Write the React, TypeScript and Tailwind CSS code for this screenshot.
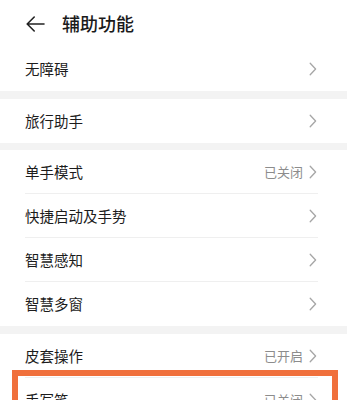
const Chevron = () => (
  <svg width="8" height="14" viewBox="0 0 8 14" fill="none" className="shrink-0">
    <path d="M1.2 1.2 L6.6 7 L1.2 12.8" stroke="#a6a6a6" strokeWidth="1.3" strokeLinecap="round" strokeLinejoin="round" />
  </svg>
);

const BackArrow = () => (
  <svg width="19" height="16" viewBox="0 0 19 16" fill="none">
    <path d="M18 8 H1.5 M8.2 1 L1.2 8 L8.2 15" stroke="#222" strokeWidth="1.6" strokeLinecap="round" strokeLinejoin="round" />
  </svg>
);

type Item = { label: string; status?: string };

const Row = ({ item, divider }: { item: Item; divider: boolean }) => (
  <div className="relative flex h-[44px] items-center pl-[25px] pr-[40px]">
    <span className="flex-1 text-[14.5px] text-[#1c1c1c]">{item.label}</span>
    {item.status && <span className="mr-[6px] text-[13px] text-[#8c8c8c]">{item.status}</span>}
    <Chevron />
    {divider && <div className="absolute bottom-0 left-[25px] h-px w-[293px] bg-[#efefef]" />}
  </div>
);

const Group = ({ items }: { items: Item[] }) => (
  <div>
    {items.map((it, i) => (
      <Row key={it.label} item={it} divider={i < items.length - 1} />
    ))}
  </div>
);

export default function App() {
  return (
    <div
      className="relative h-[400px] w-[357px] overflow-hidden bg-white"
      style={{ fontFamily: '"Noto Sans CJK SC", "Noto Sans", sans-serif' }}
    >
      <div className="flex h-[47px] items-center pl-[26px]">
        <BackArrow />
        <span className="ml-[17px] text-[18px] font-medium text-[#1a1a1a]">辅助功能</span>
      </div>
      <Group items={[{ label: "无障碍" }]} />
      <div className="h-[8px] w-[347px] bg-[#f3f3f3]" />
      <Group items={[{ label: "旅行助手" }]} />
      <div className="h-[7px] w-[347px] bg-[#f3f3f3]" />
      <Group
        items={[
          { label: "单手模式", status: "已关闭" },
          { label: "快捷启动及手势" },
          { label: "智慧感知" },
          { label: "智慧多窗" },
        ]}
      />
      <div className="h-[8px] w-[347px] bg-[#f3f3f3]" />
      <Group
        items={[
          { label: "皮套操作", status: "已开启" },
          { label: "手写笔", status: "已关闭" },
        ]}
      />
      <div className="absolute left-[12px] top-[370px] h-[60px] w-[326px] border-[6px] border-[#f0703c]" />
    </div>
  );
}
